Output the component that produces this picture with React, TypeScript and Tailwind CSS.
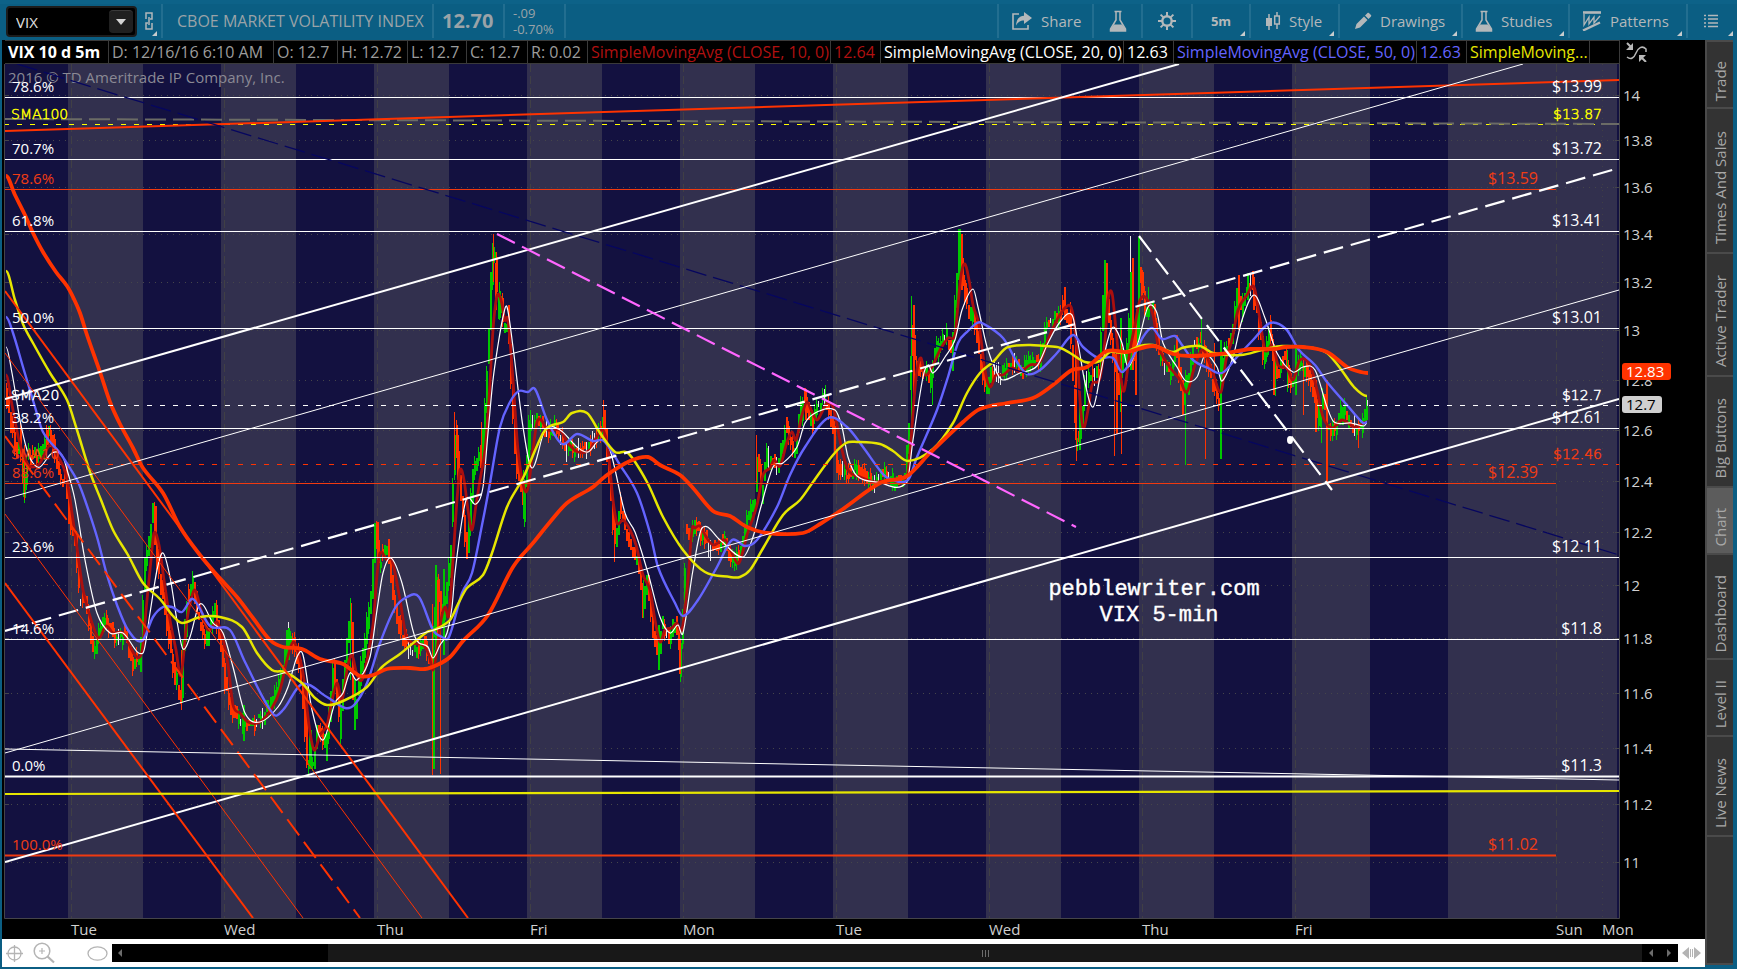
import { useState } from 'react';
import type { ReactNode } from 'react';

type Pt = [number, number];

// ---------- Toolbar icons ----------

const ShareIcon = () => (
  <svg width="22" height="20" viewBox="0 0 22 20" fill="none" aria-hidden="true">
    <path d="M8 3H2v15h15v-4" stroke="#b4b8ba" strokeWidth="1.6" />
    <path d="M13 1l8 6-8 6V9.500c-4 0-6 1.500-8 5 .3-5.500 3-9.500 8-9.700z" fill="#b4b8ba" />
  </svg>
);

const FlaskIcon = () => (
  <svg width="18" height="22" viewBox="0 0 18 22" fill="none" aria-hidden="true">
    <path d="M5.500 1.500h7M7 2v8L1.500 19v2h15v-2L11 10V2" stroke="#b4b8ba" strokeWidth="1.500" />
    <path d="M5 14.500h8l3.500 4.500v2h-15v-2z" fill="#b4b8ba" />
  </svg>
);

const GearIcon = () => (
  <svg width="20" height="20" viewBox="0 0 20 20" fill="none" stroke="#b4b8ba" aria-hidden="true">
    <circle cx="10" cy="10" r="4.700" strokeWidth="2.400" />
    <path d="M10 1v4M10 15v4M1 10h4M15 10h4M3.600 3.600l2.800 2.800M13.600 13.600l2.800 2.800M3.600 16.400l2.800-2.800M13.600 6.400l2.800-2.800" strokeWidth="2" />
  </svg>
);

const CandleIcon = () => (
  <svg width="16" height="20" viewBox="0 0 16 20" fill="none" stroke="#b4b8ba" aria-hidden="true">
    <path d="M4 3v16" strokeWidth="1.500" />
    <path d="M1 7h6v8H1z" fill="#b4b8ba" stroke="none" />
    <path d="M12 1v4M12 13v5M9.700 5h4.600v8H9.700z" strokeWidth="1.500" />
  </svg>
);

const PencilIcon = () => (
  <svg width="18" height="18" viewBox="0 0 18 18" fill="#b4b8ba" aria-hidden="true">
    <path d="M1 17l1.500-5L10 4.500 13.500 8 6 15.500zM11 3.500L13.500 1c.5-.4 1-.4 1.400 0L17 3.100c.4.400.4.900 0 1.400L14.500 7z" />
  </svg>
);

const PatternsIcon = () => (
  <svg width="20" height="20" viewBox="0 0 20 20" fill="none" stroke="#b4b8ba" aria-hidden="true">
    <path d="M1 1.500h18" strokeWidth="2.600" />
    <path d="M2 3v11l5-8v7l5-7v6l6-7" strokeWidth="1.300" />
    <path d="M1 19.500l17-8" strokeWidth="2.400" />
  </svg>
);

const ListIcon = () => (
  <svg width="14" height="14" viewBox="0 0 14 14" fill="none" stroke="#b4b8ba" aria-hidden="true">
    <path d="M4 1.500h10M4 5h10M4 9h10M4 12.500h10M0 1.500h2M0 5h2M0 9h2M0 12.500h2" strokeWidth="1.500" />
  </svg>
);

const Corner = () => (
  <svg className="absolute bottom-0.5 right-1" width="5" height="5" viewBox="0 0 5 5" aria-hidden="true">
    <path d="M5 0v5H0z" fill="#c8cccd" />
  </svg>
);

interface ToolButtonProps {
  label: string;
  text?: string;
  icon?: ReactNode;
  corner?: boolean;
  className: string;
}

const ToolButton: React.FC<ToolButtonProps> = ({ label, text, icon, corner, className }) => (
  <button aria-label={label} className={`relative flex items-center gap-2 border-l-2 border-[#226e90] text-[15px] text-[#b4b8ba] ${className}`}>
    {icon}
    {text && <span>{text}</span>}
    {corner && <Corner />}
  </button>
);

// ---------- Chart data ----------

const bands = [68, 221, 374, 527, 680, 833, 986, 1139, 1292];

const priceTicks: [string, number][] = [
  ['14', 95], ['13.8', 140], ['13.6', 187], ['13.4', 234], ['13.2', 282], ['13', 330], ['12.8', 380],
  ['12.6', 430], ['12.4', 481], ['12.2', 532], ['12', 585], ['11.8', 638], ['11.6', 693], ['11.4', 748],
  ['11.2', 804], ['11', 862],
];

const days: [string, number][] = [
  ['Tue', 71], ['Wed', 224], ['Thu', 377], ['Fri', 530], ['Mon', 683], ['Tue', 836], ['Wed', 989],
  ['Thu', 1142], ['Fri', 1295], ['Sun', 1556], ['Mon', 1602],
];

// left label, right label, y
const whiteLevels: [string, string, number][] = [
  ['78.6%', '$13.99', 97], ['70.7%', '$13.72', 159], ['61.8%', '$13.41', 231], ['50.0%', '$13.01', 328],
  ['38.2%', '$12.61', 428], ['23.6%', '$12.11', 557], ['14.6%', '$11.8', 639], ['0.0%', '$11.3', 776],
];

const redLevels: [string, string, number][] = [
  ['78.6%', '$13.59', 189], ['88.6%', '$12.39', 483], ['100.0%', '$11.02', 855],
];

const price: Pt[] = [
  [6, 395], [12, 430], [17, 450], [20, 440], [24, 490], [28, 455], [36, 455], [42, 450], [48, 435], [52, 440], [56, 460],
  [60, 480], [66, 480], [69, 520], [75, 545], [80, 600], [86, 605], [93, 650], [97, 640], [105, 620], [115, 640], [125, 635],
  [133, 665], [140, 655], [145, 560], [149, 540], [153, 510], [157, 560], [163, 600], [169, 640], [175, 680], [181, 695],
  [184, 640], [188, 595], [193, 580], [198, 620], [206, 640], [215, 605], [220, 640], [225, 685], [232, 710], [243, 725],
  [248, 722], [262, 718], [275, 695], [283, 670], [287, 635], [293, 640], [298, 660], [303, 700], [307, 765], [313, 765],
  [318, 725], [326, 745], [333, 670], [340, 720], [346, 650], [350, 620], [354, 720], [362, 660], [366, 630], [371, 590],
  [375, 530], [380, 560], [388, 550], [393, 600], [402, 640], [412, 650], [425, 645], [431, 660], [437, 580], [442, 620],
  [450, 560], [452, 500], [455, 430], [460, 490], [467, 550], [473, 470], [482, 450], [487, 370], [490, 300], [493, 250],
  [495, 250], [498, 310], [501, 300], [504, 330], [508, 320], [513, 420], [517, 470], [524, 500], [529, 430], [536, 420],
  [545, 430], [556, 428], [568, 450], [580, 452], [592, 440], [604, 425], [609, 480], [615, 545], [620, 510], [629, 540],
  [637, 560], [643, 605], [647, 580], [653, 630], [658, 655], [662, 625], [670, 640], [675, 620], [680, 655], [683, 620],
  [686, 530], [690, 540], [695, 520], [700, 530], [712, 550], [722, 540], [731, 560], [740, 550], [747, 520], [755, 500],
  [757, 455], [762, 490], [767, 455], [777, 470], [786, 430], [790, 445], [795, 450], [799, 420], [804, 397], [812, 425],
  [818, 405], [825, 398], [831, 420], [837, 465], [846, 475], [857, 470], [870, 482], [885, 475], [897, 485], [905, 475],
  [909, 420], [911, 330], [915, 360], [922, 370], [930, 380], [936, 350], [945, 335], [952, 350], [957, 270], [959, 245],
  [963, 280], [968, 310], [975, 325], [980, 360], [986, 390], [992, 370], [1002, 375], [1015, 365], [1022, 370],
  [1030, 360], [1040, 358], [1046, 325], [1056, 318], [1064, 305], [1070, 325], [1074, 400], [1076, 440], [1080, 430],
  [1085, 385], [1093, 375], [1099, 370], [1102, 310], [1104, 285], [1108, 310], [1114, 360], [1119, 390], [1123, 360],
  [1128, 340], [1131, 300], [1135, 360], [1138, 270], [1141, 280], [1146, 310], [1153, 310], [1160, 360], [1170, 370],
  [1176, 350], [1182, 400], [1188, 380], [1194, 345], [1200, 340], [1206, 360], [1213, 385], [1219, 400], [1225, 350],
  [1232, 335], [1237, 295], [1242, 310], [1247, 290], [1252, 285], [1258, 320], [1264, 360], [1270, 330], [1277, 375],
  [1285, 355], [1291, 385], [1299, 360], [1305, 370], [1312, 390], [1318, 420], [1323, 400], [1328, 430], [1336, 425],
  [1343, 410], [1353, 430], [1362, 425], [1367, 410],
];

// long wicks: x, top, bottom, colour, width
const G = '#00c800';
const R = '#ff3300';
const wicks: [number, number, number, string, number][] = [
  [23, 450, 497, G, 2], [24, 445, 500, R, 1], [7, 390, 408, R, 1], [48, 427, 445, R, 1], [154, 506, 545, R, 2],
  [156, 506, 540, R, 1], [181, 650, 710, R, 1], [182, 640, 697, G, 2], [243, 705, 741, G, 2], [288, 628, 660, G, 2],
  [306, 690, 765, R, 2], [309, 730, 769, G, 3], [350, 598, 680, G, 1], [352, 622, 700, R, 2], [354, 680, 730, G, 2],
  [374, 530, 560, G, 2], [377, 522, 560, R, 2], [432, 604, 775, R, 1], [433, 650, 769, G, 2], [435, 565, 650, G, 2],
  [437, 580, 640, R, 2], [440, 605, 774, R, 1], [443, 569, 655, G, 2], [454, 412, 470, R, 1], [457, 435, 480, R, 2],
  [490, 272, 330, G, 2], [493, 234, 282, R, 1], [495, 263, 310, R, 2], [499, 282, 320, G, 1], [523, 470, 519, G, 1],
  [481, 422, 470, R, 1], [530, 410, 450, G, 1], [603, 400, 440, R, 1], [614, 510, 562, R, 1], [643, 580, 618, G, 1],
  [658, 625, 660, G, 2], [679, 640, 674, R, 2], [756, 435, 482, R, 1], [805, 389, 420, R, 2], [825, 385, 410, G, 1],
  [911, 296, 430, G, 1], [913, 305, 400, R, 2], [932, 360, 405, G, 1], [958, 229, 280, G, 3], [961, 234, 290, R, 2],
  [1064, 287, 320, R, 2], [1075, 340, 440, R, 2], [1076, 400, 461, R, 1], [1079, 400, 450, G, 2], [1104, 260, 330, G, 2],
  [1106, 263, 310, R, 2], [1114, 350, 456, R, 1], [1116, 350, 434, R, 2], [1120, 318, 412, G, 2], [1121, 330, 454, R, 1],
  [1130, 236, 272, '#e8e8e8', 1], [1130, 272, 370, G, 2], [1132, 258, 370, R, 2], [1135, 320, 395, R, 2],
  [1138, 237, 340, G, 2], [1141, 270, 300, R, 2], [1148, 287, 320, G, 1], [1182, 380, 415, R, 2], [1185, 370, 465, G, 1],
  [1201, 318, 350, G, 1], [1205, 380, 459, R, 1], [1214, 343, 390, R, 1], [1220, 340, 459, G, 2], [1238, 275, 330, R, 2],
  [1247, 273, 300, G, 2], [1253, 277, 310, R, 2], [1273, 350, 395, R, 2], [1275, 360, 396, G, 1], [1287, 350, 392, G, 1],
  [1295, 345, 395, G, 2], [1303, 360, 415, R, 1], [1315, 380, 432, R, 2], [1321, 410, 443, G, 1], [1326, 380, 483, R, 2],
  [1342, 407, 425, G, 2], [1358, 420, 448, R, 1], [1367, 400, 416, '#e8e8e8', 1], [1366, 406, 420, G, 2],
];

const sma10: Pt[] = [
  [6, 375], [12, 405], [19, 440], [27, 463], [33, 467], [40, 463], [50, 445], [57, 455], [66, 475], [73, 520], [78, 555],
  [83, 590], [92, 623], [99, 638], [106, 626], [113, 633], [123, 633], [135, 655], [142, 651], [147, 600], [151, 560],
  [154, 533], [159, 545], [164, 580], [170, 620], [176, 650], [181, 675], [187, 620], [191, 600], [195, 590], [201, 610],
  [208, 630], [217, 622], [222, 635], [228, 665], [233, 705], [240, 713], [248, 722], [260, 722], [272, 708], [280, 690],
  [287, 660], [293, 642], [299, 655], [304, 680], [309, 725], [314, 750], [320, 735], [327, 725], [331, 705], [337, 683],
  [342, 700], [348, 665], [352, 655], [357, 675], [362, 680], [367, 660], [373, 625], [377, 575], [380, 553], [387, 560],
  [392, 560], [400, 600], [406, 635], [413, 643], [423, 645], [429, 655], [433, 670], [437, 650], [441, 620], [445, 607],
  [449, 615], [453, 560], [457, 500], [460, 470], [464, 480], [468, 510], [472, 530], [476, 505], [480, 480], [485, 450],
  [489, 400], [493, 330], [497, 296], [501, 300], [505, 320], [508, 320], [513, 380], [518, 450], [524, 488], [528, 488],
  [533, 450], [537, 422], [541, 420], [548, 430], [560, 430], [568, 443], [578, 452], [590, 450], [596, 438], [603, 430],
  [608, 450], [613, 500], [617, 523], [623, 520], [630, 530], [636, 545], [643, 575], [650, 590], [655, 620], [660, 642],
  [665, 630], [672, 628], [677, 623], [682, 630], [688, 580], [692, 530], [695, 528], [700, 526], [705, 535], [713, 545],
  [725, 540], [733, 555], [739, 563], [747, 535], [757, 505], [763, 475], [770, 468], [774, 460], [780, 466], [787, 442],
  [792, 432], [796, 440], [802, 415], [807, 402], [812, 412], [817, 420], [822, 412], [827, 403], [833, 407], [837, 425],
  [842, 450], [848, 470], [860, 477], [875, 482], [890, 480], [907, 478], [911, 440], [914, 400], [917, 370], [921, 358],
  [925, 375], [932, 367], [940, 350], [948, 338], [955, 335], [958, 305], [961, 275], [965, 264], [969, 280], [973, 305],
  [979, 325], [985, 370], [990, 387], [996, 375], [1003, 375], [1012, 368], [1020, 372], [1030, 365], [1040, 362],
  [1048, 340], [1057, 320], [1066, 307], [1072, 310], [1077, 350], [1080, 400], [1083, 428], [1088, 410], [1092, 385],
  [1100, 378], [1105, 340], [1108, 300], [1112, 293], [1116, 330], [1120, 370], [1124, 391], [1130, 350], [1135, 325],
  [1140, 300], [1146, 298], [1153, 315], [1158, 345], [1165, 360], [1172, 370], [1180, 380], [1187, 392], [1195, 365],
  [1203, 350], [1212, 370], [1221, 392], [1226, 360], [1232, 340], [1238, 310], [1247, 295], [1254, 287], [1260, 320],
  [1265, 350], [1273, 345], [1278, 365], [1287, 368], [1293, 380], [1300, 360], [1310, 365], [1317, 390], [1323, 417],
  [1332, 428], [1342, 420], [1355, 427], [1367, 422],
];

const sma20: Pt[] = [
  [6, 347], [12, 373], [20, 420], [27, 450], [33, 463], [40, 467], [52, 453], [62, 455], [68, 473], [75, 500], [85, 560],
  [97, 613], [110, 633], [123, 633], [143, 653], [150, 613], [157, 570], [163, 553], [170, 577], [178, 627], [183, 649],
  [190, 637], [200, 604], [213, 623], [223, 633], [233, 667], [245, 713], [260, 722], [278, 707], [288, 687], [297, 657],
  [303, 655], [312, 710], [323, 740], [335, 703], [343, 693], [350, 673], [357, 680], [370, 657], [377, 610], [383, 573],
  [391, 558], [402, 583], [415, 637], [428, 647], [433, 658], [440, 645], [447, 633], [452, 607], [455, 573], [462, 520],
  [467, 498], [476, 504], [483, 487], [488, 433], [493, 380], [498, 345], [503, 317], [507, 307], [513, 347], [523, 427],
  [532, 468], [545, 430], [560, 430], [577, 447], [588, 452], [600, 440], [610, 450], [625, 513], [635, 532], [648, 573],
  [660, 617], [670, 633], [678, 625], [683, 633], [693, 570], [702, 528], [720, 540], [743, 557], [753, 537], [760, 510],
  [773, 467], [783, 463], [797, 447], [805, 423], [817, 412], [835, 410], [842, 427], [848, 457], [857, 476], [877, 482],
  [907, 482], [913, 440], [923, 377], [928, 365], [933, 373], [945, 357], [955, 340], [962, 310], [973, 289], [978, 307],
  [987, 347], [997, 373], [1003, 380], [1020, 373], [1037, 366], [1048, 343], [1060, 322], [1072, 315], [1078, 343],
  [1085, 383], [1093, 407], [1100, 377], [1107, 343], [1113, 327], [1122, 343], [1128, 367], [1138, 343], [1148, 307],
  [1157, 313], [1163, 343], [1177, 367], [1186, 381], [1197, 377], [1205, 355], [1217, 367], [1222, 381], [1233, 357],
  [1242, 320], [1254, 295], [1265, 318], [1277, 353], [1293, 372], [1303, 367], [1315, 370], [1327, 407], [1334, 422],
  [1351, 423], [1364, 426], [1367, 423],
];

const sma50: Pt[] = [
  [6, 317], [13, 333], [23, 367], [35, 407], [43, 432], [60, 453], [68, 465], [78, 482], [85, 500], [97, 537], [107, 575],
  [117, 605], [128, 630], [142, 641], [153, 617], [163, 607], [172, 607], [182, 612], [193, 599], [210, 626], [230, 630],
  [245, 662], [273, 714], [283, 710], [302, 684], [327, 697], [345, 708], [355, 704], [367, 683], [380, 643], [395, 608],
  [407, 597], [419, 597], [433, 630], [442, 637], [449, 637], [462, 593], [472, 573], [483, 520], [490, 483], [500, 427],
  [510, 402], [519, 391], [528, 392], [535, 389], [547, 420], [562, 444], [577, 434], [593, 441], [604, 441], [620, 465],
  [637, 493], [650, 533], [658, 567], [675, 603], [683, 616], [698, 600], [717, 567], [732, 540], [745, 546], [757, 540],
  [777, 507], [790, 475], [805, 447], [828, 418], [847, 427], [863, 447], [882, 473], [890, 479], [908, 480], [917, 457],
  [937, 410], [948, 377], [958, 343], [968, 331], [977, 323], [982, 323], [1003, 338], [1017, 362], [1027, 374],
  [1040, 370], [1057, 353], [1073, 335], [1083, 347], [1098, 358], [1113, 358], [1122, 372], [1133, 357], [1143, 337],
  [1152, 328], [1162, 339], [1175, 336], [1182, 345], [1193, 360], [1208, 368], [1222, 373], [1237, 357], [1253, 340],
  [1270, 323], [1286, 329], [1299, 350], [1315, 365], [1327, 382], [1347, 405], [1363, 423], [1367, 422],
];

const sma100: Pt[] = [
  [6, 271], [15, 300], [23, 324], [33, 343], [50, 373], [67, 400], [77, 430], [90, 472], [101, 500], [113, 530],
  [128, 555], [143, 583], [160, 599], [173, 616], [182, 623], [200, 617], [220, 617], [242, 627], [257, 653], [272, 670],
  [285, 672], [302, 683], [315, 698], [327, 705], [343, 701], [367, 687], [382, 667], [400, 654], [427, 632], [434, 630],
  [450, 620], [458, 604], [467, 588], [483, 575], [492, 553], [507, 507], [523, 478], [543, 433], [550, 426], [563, 422],
  [572, 413], [587, 413], [600, 433], [615, 452], [628, 453], [647, 482], [663, 517], [683, 550], [705, 572], [730, 577],
  [740, 577], [750, 570], [762, 550], [783, 515], [800, 500], [813, 482], [833, 455], [846, 443], [857, 442], [880, 444],
  [893, 451], [908, 461], [933, 449], [953, 423], [967, 393], [980, 373], [993, 362], [1008, 347], [1057, 347],
  [1070, 353], [1085, 362], [1100, 361], [1110, 352], [1123, 353], [1140, 346], [1153, 345], [1173, 352], [1182, 348],
  [1200, 346], [1213, 353], [1241, 355], [1262, 350], [1282, 346], [1313, 348], [1327, 353], [1340, 368], [1354, 387],
  [1367, 396],
];

const sma200: Pt[] = [
  [6, 176], [15, 195], [25, 215], [33, 233], [43, 252], [56, 272], [67, 286], [73, 297], [80, 313], [87, 335], [100, 372],
  [110, 402], [120, 424], [133, 448], [143, 468], [163, 493], [180, 527], [200, 555], [217, 575], [237, 597], [253, 618],
  [270, 640], [283, 647], [302, 649], [320, 659], [343, 664], [360, 676], [373, 675], [387, 669], [410, 668], [425, 669],
  [437, 665], [450, 657], [463, 641], [488, 615], [513, 567], [533, 543], [550, 522], [567, 503], [593, 487], [607, 475],
  [630, 461], [648, 457], [660, 465], [680, 475], [693, 488], [713, 511], [730, 516], [747, 527], [767, 533], [803, 533],
  [820, 524], [843, 509], [880, 483], [907, 476], [930, 453], [963, 422], [980, 409], [1007, 403], [1033, 398],
  [1053, 385], [1072, 370], [1087, 367], [1107, 351], [1127, 352], [1153, 346], [1173, 354], [1190, 356], [1220, 354],
  [1251, 349], [1275, 349], [1286, 347], [1303, 347], [1327, 352], [1347, 367], [1357, 371], [1368, 373],
];

// x1, y1, x2, y2, colour, width, dash
const drawings: [number, number, number, number, string, number, string?][] = [
  [5, 119, 1619, 124, '#6b6b66', 2, '21 7'],
  [5, 131, 1619, 80, '#ff3300', 2],
  [17, 64, 1619, 555, '#06065f', 1.3, '21 7'],
  [5, 399, 1179, 64, '#ffffff', 2],
  [5, 499, 1523, 64, '#ffffff', 1],
  [5, 631, 1619, 168, '#ffffff', 2.2, '20 8'],
  [5, 753, 1619, 290, '#ffffff', 1],
  [5, 862, 1619, 399, '#ffffff', 2],
  [5, 291, 468, 918, '#ff3300', 2],
  [5, 353, 422, 918, '#ff3300', 1],
  [5, 436, 360, 918, '#ff3300', 2, '20 8'],
  [5, 514, 303, 918, '#ff3300', 1],
  [5, 583, 253, 918, '#ff3300', 2],
  [5, 749, 1619, 780, '#ffffff', 1],
  [5, 794, 1619, 791, '#e6e600', 2.2],
  [497, 234, 1076, 527, '#ff66ff', 2.2, '20 8'],
  [1139, 236, 1332, 490, '#ffffff', 2.2, '20 8'],
];

// Smooth curve through the points (Catmull-Rom as cubic segments)
const toPath = (pts: Pt[]) => {
  let d = `M${pts[0][0]} ${pts[0][1]}`;
  for (let i = 0; i < pts.length - 1; i++) {
    const a = pts[Math.max(i - 1, 0)];
    const b = pts[i];
    const c = pts[i + 1];
    const e = pts[Math.min(i + 2, pts.length - 1)];
    const k = (c[0] - b[0]) / 3;
    const s1 = i === 0 ? 0 : (c[1] - a[1]) / (c[0] - a[0]);
    const s2 = i === pts.length - 2 ? 0 : (e[1] - b[1]) / (e[0] - b[0]);
    d += `C${b[0] + k} ${b[1] + s1 * k} ${c[0] - k} ${c[1] - s2 * k} ${c[0]} ${c[1]}`;
  }
  return d;
};

const noise = (n: number) => {
  const v = Math.sin(n * 12.9898) * 43758.5453;
  return v - Math.floor(v);
};

// One bar every two pixels, following the price path
const buildBars = () => {
  const list: { x: number; y: number; w: number; h: number; fill: string }[] = [];
  let k = 0;
  for (let x = 6; x <= 1367; x += 2) {
    while (k < price.length - 2 && price[k + 1][0] <= x) k++;
    const [x0, y0] = price[k];
    const [x1, y1] = price[k + 1];
    const slope = (y1 - y0) / (x1 - x0);
    const mid = y0 + slope * (x - x0) + (noise(x) - 0.5) * 10;
    const h = 3 + Math.min(Math.abs(slope) * 2, 30) + noise(x + 0.5) * 8;
    const bias = slope / 4 + (noise(x * 3) - 0.5) * 2;
    const flat = Math.abs(slope) < 2 && noise(x * 7) > 0.8;
    const fill = flat ? '#e8e8e8' : bias > 0 ? R : G;
    list.push({ x, y: Math.round(mid - h / 2), w: flat ? 1 : 2, h: Math.round(h), fill });
    // thin shadow past the body
    if (noise(x * 11) > 0.5) {
      const tail = h + 10;
      list.push({ x, y: Math.round(mid - tail / 2), w: 1, h: Math.round(tail), fill });
    }
  }
  return list;
};

const bars = buildBars();

const Chart = () => (
  <svg viewBox="2 64 1703 875" className="block h-auto w-full bg-black font-['Open_Sans','Noto_Sans',sans-serif] text-[15px]" role="img" aria-label="VIX 5 minute chart">
    <defs>
      <clipPath id="plot">
        <rect x="5" y="64" width="1614" height="854" />
      </clipPath>
    </defs>
    <rect x="5" y="64" width="1614" height="854" fill="#131140" />

    {/* Session shading */}
    {bands.map((x) => (
      <rect key={x} x={x} y="64" width={x === 1292 ? 78 : 75} height="854" fill="#32304e" />
    ))}
    <rect x="1448" y="64" width="169" height="854" fill="#32304e" />

    {/* Grid */}
    <g stroke="#45454a" strokeWidth="1">
      {priceTicks.map(([label, y]) => (
        <g key={label}>
          <line x1="5" x2="1619" y1={y + 0.5} y2={y + 0.5} strokeDasharray="1 5" />
          <path d={`M5 ${y + 0.5}h4M1615 ${y + 0.5}h4`} />
        </g>
      ))}
      {days.map(([, x]) => (
        <line key={x} x1={x + 0.5} x2={x + 0.5} y1="64" y2="918" stroke="#403f45" strokeDasharray={x === 1602 ? '1 5' : '8 4'} />
      ))}
    </g>

    <text x="8" y="83" fill="#8a8994">2016 © TD Ameritrade IP Company, Inc.</text>

    <g clipPath="url(#plot)" fill="none">
      <g shapeRendering="crispEdges">
        {bars.map((b, i) => (
          <rect key={i} x={b.x} y={b.y} width={b.w} height={b.h} fill={b.fill} />
        ))}
        {wicks.map(([x, top, bottom, fill, width], i) => (
          <rect key={i} x={x} y={top} width={width} height={bottom - top} fill={fill} />
        ))}
      </g>

      {/* Moving averages */}
      <g strokeLinejoin="round">
        <path d={toPath(sma10)} stroke="#aa0f0f" strokeWidth="2.800" />
        <path d={toPath(sma20)} stroke="#ffffff" strokeWidth="1.200" />
        <path d={toPath(sma50)} stroke="#6464ff" strokeWidth="2.400" />
        <path d={toPath(sma100)} stroke="#e6e600" strokeWidth="2.500" />
        <path d={toPath(sma200)} stroke="#ff3300" strokeWidth="3.800" />
      </g>

      {/* Levels */}
      {redLevels.map(([, label, y]) => (
        <line key={label} x1="5" x2="1556" y1={y + 0.5} y2={y + 0.5} stroke="#f03a10" strokeWidth={y === 855 ? 2 : 1} />
      ))}
      {whiteLevels.map(([, label, y]) => (
        <line key={label} x1="5" x2="1619" y1={y + 0.5} y2={y + 0.5} stroke="#ffffff" strokeWidth={y === 776 ? 2 : 1} />
      ))}
      <line x1="4" x2="1619" y1="124.500" y2="124.500" stroke="#ffff00" strokeDasharray="5 8" />
      <line x1="4" x2="1619" y1="405.500" y2="405.500" stroke="#ffffff" strokeDasharray="5 8" />
      <line x1="4" x2="1619" y1="464.500" y2="464.500" stroke="#ff3300" strokeDasharray="5 8" />

      {/* Trend lines and channels */}
      {drawings.map(([x1, y1, x2, y2, stroke, width, dash], i) => (
        <line key={i} x1={x1} y1={y1} x2={x2} y2={y2} stroke={stroke} strokeWidth={width} strokeDasharray={dash} />
      ))}
      <ellipse cx="1290" cy="440" rx="3" ry="4" fill="#ffffff" />
    </g>

    {/* Labels on the plot */}
    {whiteLevels.map(([left, right, y]) => (
      <g key={right} fill="#ffffff">
        <text x="12" y={y - 5}>{left}</text>
        <text x="1602" y={y - 5} textAnchor="end" className="text-[16px]">{right}</text>
      </g>
    ))}
    {redLevels.map(([left, right, y]) => (
      <g key={right} fill="#f03c14">
        <text x="12" y={y - 5}>{left}</text>
        <text x="1538" y={y - 5} textAnchor="end" className="text-[16px]">{right}</text>
      </g>
    ))}
    <g className="font-['DejaVu_Sans',sans-serif] text-[14px] font-extralight">
      <g fill="#ffff00" stroke="#ffff00" strokeWidth="0.500">
        <text x="11" y="119">SMA100</text>
        <text x="1602" y="119" textAnchor="end">$13.87</text>
      </g>
      <g fill="#ffffff" stroke="#ffffff" strokeWidth="0.500">
        <text x="11" y="400">SMA20</text>
        <text x="1602" y="400" textAnchor="end">$12.7</text>
      </g>
      <g fill="#f03c14" stroke="#f03c14" strokeWidth="0.500">
        <text x="11" y="459">SMA10</text>
        <text x="1602" y="459" textAnchor="end">$12.46</text>
      </g>
    </g>
    <g className="font-['Liberation_Mono',monospace] text-[22px]" fill="#ffffff" stroke="#ffffff" strokeWidth="0.400">
      <text x="1154" y="595" textAnchor="middle">pebblewriter.com</text>
      <text x="1159" y="621" textAnchor="middle">VIX 5-min</text>
    </g>

    {/* Axes */}
    <path d="M4.500 64v854.500h1615V64" fill="none" stroke="#45454a" />
    <g fill="#d0d0d0">
      {priceTicks.map(([label, y]) => (
        <text key={label} x="1623" y={y + 6}>{label}</text>
      ))}
      {days.map(([label, x]) => (
        <text key={x} x={x} y="935">{label}</text>
      ))}
    </g>
    <rect x="1622" y="363" width="49" height="17" rx="3" fill="#ff3300" />
    <text x="1626" y="377" fill="#ffffff">12.83</text>
    <rect x="1622" y="396" width="40" height="17" rx="3" fill="#cfcfcf" />
    <text x="1626" y="410" fill="#000000">12.7</text>
  </svg>
);

const legend = [
  { text: 'D: 12/16/16 6:10 AM', style: 'w-[165px] text-[#9c9c9c]' },
  { text: 'O: 12.7', style: 'w-16 text-[#9c9c9c]' },
  { text: 'H: 12.72', style: 'w-[70px] text-[#9c9c9c]' },
  { text: 'L: 12.7', style: 'w-[59px] text-[#9c9c9c]' },
  { text: 'C: 12.7', style: 'w-[61px] text-[#9c9c9c]' },
  { text: 'R: 0.02', style: 'w-[60px] text-[#9c9c9c]' },
  { text: 'SimpleMovingAvg (CLOSE, 10, 0)', style: 'w-[243px] text-[#b01010]' },
  { text: '12.64', style: 'w-[50px] text-[#b01010]' },
  { text: 'SimpleMovingAvg (CLOSE, 20, 0)', style: 'w-[243px] text-white' },
  { text: '12.63', style: 'w-[50px] text-white' },
  { text: 'SimpleMovingAvg (CLOSE, 50, 0)', style: 'w-[243px] text-[#6464ff]' },
  { text: '12.63', style: 'w-[50px] text-[#6464ff]' },
  { text: 'SimpleMoving...', style: 'w-[123px] text-[#e6e600]' },
];

const tabs = [
  { name: 'Trade', size: 'h-[65px]' },
  { name: 'Times And Sales', size: 'h-[143px]' },
  { name: 'Active Trader', size: 'h-[121px]' },
  { name: 'Big Buttons', size: 'h-[109px]' },
  { name: 'Chart', size: 'h-[65px]' },
  { name: 'Dashboard', size: 'h-[103px]' },
  { name: 'Level II', size: 'h-[75px]' },
  { name: 'Live News', size: 'h-[98px]' },
];

const App: React.FC = () => {
  const [symbol, setSymbol] = useState('VIX');
  const [activeTab, setActiveTab] = useState('Chart');

  return (
    <div className="flex min-h-screen flex-col bg-[#0b5e83] font-['Open_Sans','Noto_Sans',sans-serif] text-[15px] leading-5">
      {/* Toolbar */}
      <header className="flex h-10 items-stretch border-t-4 border-[#0d6288] pb-0.5">
        <div className="ml-1.5 mt-0.5 flex h-[31px] w-[131px] shrink-0 items-center rounded-sm border-2 border-[#1c1c1c] bg-black pr-0.5">
          <input
            aria-label="Symbol"
            value={symbol}
            onChange={(e) => setSymbol(e.target.value)}
            className="w-0 grow bg-transparent pl-2 text-[#e0e0e0] outline-none"
          />
          <button aria-label="Symbol list" className="flex h-[23px] w-6 items-center justify-center rounded-sm border-t border-[#3a3a3a] bg-[#202020]">
            <svg width="10" height="6" viewBox="0 0 10 6" aria-hidden="true">
              <path d="M0 0h10L5 6z" fill="#d4d4d4" />
            </svg>
          </button>
        </div>
        <button aria-label="Link symbol" className="relative flex w-6 shrink-0 items-center justify-center">
          <svg width="8" height="18" viewBox="0 0 8 18" fill="none" stroke="#b4b8ba" strokeWidth="1.500" aria-hidden="true">
            <path d="M1 7V1h6v6H5M7 11v6H1v-6h2M4 5v8" />
          </svg>
          <Corner />
        </button>
        <div className="flex w-[271px] items-center border-l-2 border-[#226e90] pl-3.5 text-base whitespace-nowrap text-[#9aa3a8]">CBOE MARKET VOLATILITY INDEX</div>
        <div className="flex w-[71px] items-center border-l-2 border-[#226e90] pl-2 text-[20px] font-bold text-[#9aa3a8]">12.70</div>
        <div className="flex w-[61px] flex-col justify-center border-l-2 border-[#226e90] pl-2 text-[13px] leading-4 text-[#9aa3a8]">
          <span>-.09</span>
          <span>-0.70%</span>
        </div>
        <div className="grow border-l-2 border-[#226e90]" />
        <ToolButton label="Share" text="Share" icon={<ShareIcon />} className="w-[95px] pl-3" />
        <ToolButton label="Lab" icon={<FlaskIcon />} className="w-[49px] justify-center" />
        <ToolButton label="Settings" icon={<GearIcon />} className="w-[50px] justify-center" />
        <button className="relative flex w-[58px] items-center justify-center border-l-2 border-[#226e90] text-[13px] font-bold text-[#b4b8ba]">
          5m
          <Corner />
        </button>
        <ToolButton label="Style" text="Style" icon={<CandleIcon />} corner className="w-[89px] pl-3.5" />
        <ToolButton label="Drawings" text="Drawings" icon={<PencilIcon />} corner className="w-[123px] pl-3.5" />
        <ToolButton label="Studies" text="Studies" icon={<FlaskIcon />} corner className="w-[107px] pl-3" />
        <ToolButton label="Patterns" text="Patterns" icon={<PatternsIcon />} corner className="w-[118px] pl-3" />
        <ToolButton label="Menu" icon={<ListIcon />} corner className="w-[51px] pl-4" />
      </header>

      <div className="flex grow">
        <main className="ml-0.5 flex min-w-0 grow flex-col bg-white">
          {/* Legend */}
          <div className="flex h-6 items-stretch overflow-hidden bg-black pl-[3px] text-base leading-5 whitespace-nowrap">
            <div className="flex w-[103px] shrink-0 items-center border-y border-[#3a3a3a] pl-[3px] font-bold text-white">VIX 10 d 5m</div>
            {legend.map((cell, i) => (
              <div key={i} className={`flex shrink-0 items-center border-y border-l border-[#3a3a3a] pl-[3px] ${cell.style}`}>
                {cell.text}
              </div>
            ))}
            <div className="w-[31px] shrink-0 border border-[#3a3a3a]" />
            <button aria-label="Fit chart" className="flex items-center pl-1.5">
              <svg width="21" height="20" viewBox="0 0 21 20" fill="none" stroke="#b8b8b8" aria-hidden="true">
                <path d="M1 15c4 3 7 1 9-4s6-8 10-4v3" strokeWidth="1.500" />
                <path d="M1 1l4 4M20 20l-4-4" strokeWidth="2" />
                <path d="M7 1v7H0zM13 13h7l-7 7z" fill="#b8b8b8" stroke="none" />
              </svg>
            </button>
          </div>

          <Chart />

          {/* Footer with scroll bar */}
          <div className="flex h-7 items-center">
            <button aria-label="Crosshair" className="ml-1">
              <svg width="17" height="17" viewBox="0 0 17 17" fill="none" stroke="#b4b4b4" aria-hidden="true">
                <circle cx="8.500" cy="8.500" r="6.500" strokeWidth="1.300" />
                <path d="M8.500 0v17M0 8.500h17" strokeWidth="1.300" />
              </svg>
            </button>
            <button aria-label="Zoom in" className="ml-2.5">
              <svg width="22" height="22" viewBox="0 0 22 22" fill="none" stroke="#b4b4b4" aria-hidden="true">
                <circle cx="9" cy="9" r="7.800" strokeWidth="1.500" />
                <path d="M9 6v6M6 9h6" strokeWidth="1.200" />
                <path d="M14.500 14.500l6.500 6" strokeWidth="2.200" />
              </svg>
            </button>
            <button aria-label="Draw ellipse" className="ml-8">
              <svg width="21" height="15" viewBox="0 0 21 15" fill="none" stroke="#b4b4b4" aria-hidden="true">
                <ellipse cx="10.500" cy="7.500" rx="9.500" ry="6.700" strokeWidth="1.300" />
              </svg>
            </button>
            <div className="ml-1 flex h-[18px] grow items-center bg-black">
              <button aria-label="Scroll left" className="w-[216px] pl-1.5">
                <svg width="4" height="8" viewBox="0 0 4 8" aria-hidden="true"><path d="M4 0v8L0 4z" fill="#6c6c6c" /></svg>
              </button>
              <div className="flex h-full grow items-center justify-center gap-0.5 bg-[#181818]">
                <span className="h-[7px] w-px bg-[#6c6c6c]" />
                <span className="h-[7px] w-px bg-[#6c6c6c]" />
                <span className="h-[7px] w-px bg-[#6c6c6c]" />
              </div>
              <button aria-label="Step left" className="flex w-[18px] justify-center">
                <svg width="4" height="8" viewBox="0 0 4 8" aria-hidden="true"><path d="M4 0v8L0 4z" fill="#6c6c6c" /></svg>
              </button>
              <button aria-label="Step right" className="flex w-[18px] justify-center">
                <svg width="4" height="8" viewBox="0 0 4 8" aria-hidden="true"><path d="M0 0v8l4-4z" fill="#6c6c6c" /></svg>
              </button>
            </div>
            <button aria-label="Expand area" className="mx-1">
              <svg width="19" height="12" viewBox="0 0 19 12" fill="#b4b4b4" aria-hidden="true">
                <path d="M7 0v12L0 6zM12 0v12l7-6zM8 2h1v8H8zM10 2h1v8h-1z" />
              </svg>
            </button>
          </div>
        </main>

        {/* Side tabs */}
        <nav className="mb-0.5 mr-1 flex w-7 shrink-0 flex-col gap-0.5 border-2 border-r-0 border-[#4a4a4a] bg-[#4a4a4a]">
          {tabs.map((tab) => (
            <button
              key={tab.name}
              onClick={() => setActiveTab(tab.name)}
              className={`flex items-center justify-center pt-3.5 text-[#a8a8a8] ${tab.size} ${activeTab === tab.name ? 'bg-[#5c5c5c]' : 'bg-[#333333]'}`}
            >
              <span className="rotate-180 whitespace-nowrap [writing-mode:vertical-rl]">{tab.name}</span>
            </button>
          ))}
          <div className="grow bg-[#333333]" />
        </nav>
      </div>
      <div className="h-0.5 bg-[#0b5e83]" />
    </div>
  );
};

export default App;
